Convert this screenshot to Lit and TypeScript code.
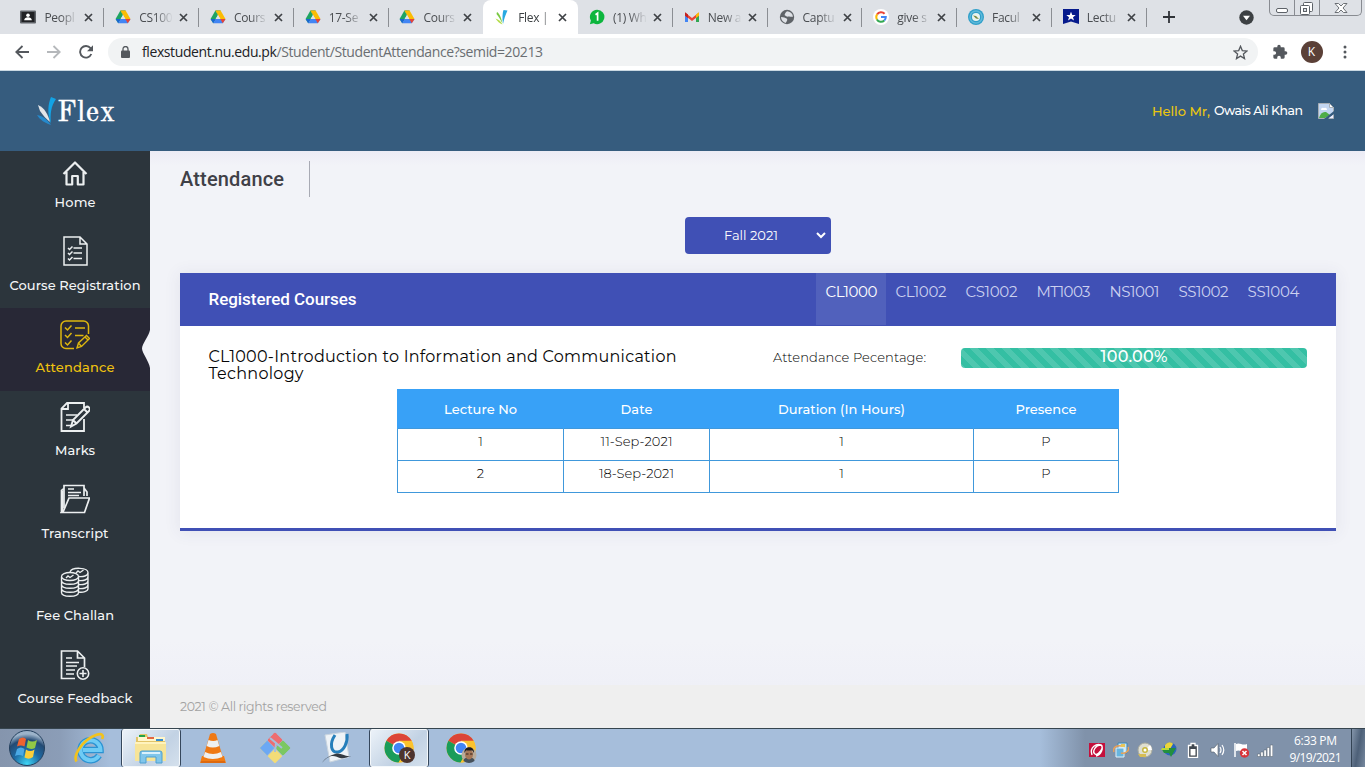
import { LitElement, html, css, svg } from "lit";
import { customElement, property, query } from "lit/decorators.js";
import { classMap } from "lit/directives/class-map.js";

/** Single line of text tracked out (or in) to occupy a given width. */
@customElement("fit-text")
class FitText extends LitElement {
  @property({ type: Number }) width = 0;
  @query("span") private span!: HTMLSpanElement;
  static styles = css`
    :host { display: inline-block; white-space: nowrap; text-align: left; }
    span { display: inline-block; }
  `;
  firstUpdated() {
    const natural = this.span.getBoundingClientRect().width;
    const count = (this.textContent || "").trim().length;
    if (natural && count > 1) {
      this.span.style.letterSpacing = `${(this.width - natural) / (count - 1)}px`;
    }
    this.style.width = `${this.width}px`;
  }
  render() {
    return html`<span><slot></slot></span>`;
  }
}

const favicons: Record<string, unknown> = {
  people: svg`<rect y="1.5" width="16" height="13" rx="1" fill="#5f6368"/><rect x="1.5" y="3" width="13" height="10" fill="#202124"/>
    <circle cx="8" cy="6.2" r="1.8" fill="#fff"/><path d="M4.2 11.3c0-4 7.6-4 7.6 0z" fill="#fff"/>`,
  drive: svg`
    <path d="M5.4 1.5h5.2L8 6z" fill="#188038"/>
    <path d="M5.4 1.5 0.6 10l2.6 4.2L8 6z" fill="#1fa463"/>
    <path d="M10.6 1.5 15.5 10h-5.2L5.4 1.5z" fill="#fbbc04"/>
    <path d="M3.2 14.3 5.8 10h9.7l-2.7 4.3z" fill="#4285f4"/>
    <path d="M10.3 10h5.2l-2.7 4.3z" fill="#ea4335"/>
    <path d="M.6 10h5.2l-2.6 4.3z" fill="#1967d2"/>
    <path d="M8 6 5.700 10h4.600z" fill="#dee1e6"/>`,
  flex: svg`<path d="M9 15C8 9 8.500 4 9.500 1l4 .5C11.500 6 10 10 9 15z" fill="#27a9e1"/><path d="M8.500 14.500C7.500 9.500 6 5 3 3l-.5 2C5 8 6.500 11 8.500 14.500z" fill="#7ac943"/><path d="M8.500 15.500C7 12.500 5 10.500 1.500 9.500 3.500 12.500 5.500 14.500 8.500 15.500z" fill="#b5dd4b"/>`,
  whatsapp: svg`<path d="M8.200.8a7.200 7.200 0 1 1-3.500 13.500L.9 15.200l1-3.600A7.200 7.200 0 0 1 8.200.8z" fill="#0db63e"/><path d="M6.500 5.700 8.600 4.200v7.600" stroke="#fff" stroke-width="1.700" fill="none"/>`,
  gmail: svg`<path d="M1 4v9h3V6.500z" fill="#4285f4"/><path d="M15 4v9h-3V6.500z" fill="#34a853"/><path d="M1 3.500 8 9l7-5.500v3L8 12 1 6.500z" fill="#ea4335"/><path d="M12 5.500 15 3.200v3.500l-3 2.200z" fill="#fbbc04"/><path d="M1 3.200 4 5.500V9L1 6.700z" fill="#c5221f"/>`,
  globe: svg`<circle cx="8" cy="8" r="7.200" fill="#5f6368"/><path d="M2 8c3 0 4 1 5.500 1.500S8 12.500 6.500 14C4 13 2 11 2 8zM8 2.200c3 .2 5.500 2 6 5.300-1.500 1-3-.5-4.500 0S7 7 6 6.500 6 4 8 2.200z" fill="#dee1e6"/>`,
  google: svg`<circle cx="8" cy="8" r="8" fill="#fff"/><g fill="none" stroke-width="2"><path d="M4.100 5.400A4.800 4.800 0 0 1 11.600 4.800" stroke="#ea4335"/><path d="M3.900 10.400A4.800 4.800 0 0 1 4.100 5.400" stroke="#fbbc04"/><path d="M11.300 11.500A4.800 4.800 0 0 1 3.900 10.400" stroke="#34a853"/><path d="M8 8h4.800a4.800 4.800 0 0 1-1.500 3.500" stroke="#4285f4"/></g>`,
  faculty: svg`<circle cx="8" cy="8" r="8" fill="#2f9fc9"/><circle cx="8" cy="8" r="6" fill="none" stroke="#5fb9da" stroke-width="1.500"/><circle cx="8" cy="8" r="4" fill="#e9f4ee"/><path d="m5 6.500 3 .5 3 3-3-.5z" fill="#7a8b43"/>`,
  lecture: svg`<path d="M0 0h16v15l-8-2.500L0 15z" fill="#061a8c"/><path d="m8 2.800 1.300 3.300h3.400l-2.700 2.100 1 3.400-3-2-3 2 1-3.400-2.700-2.100h3.400z" fill="#fff"/>`,
};

const tabs = [
  ["people", "Peopl"], ["drive", "CS100"], ["drive", "Cours"], ["drive", "17-Se"],
  ["drive", "Cours"], ["flex", "Flex |"], ["whatsapp", "(1) Wh"], ["gmail", "New a"],
  ["globe", "Captu"], ["google", "give s"], ["faculty", "Facul"], ["lecture", "Lectu"],
];

@customElement("browser-chrome")
class BrowserChrome extends LitElement {
  static styles = css`
    :host { display: block; height: 71px; font-family: "Open Sans", "Noto Sans", sans-serif; flex: none; }
    .strip { height: 34px; background: #dee1e6; display: flex; padding-left: 9.600px; box-sizing: border-box; }
    .tab { width: 94.780px; box-sizing: border-box; flex: none; display: flex; align-items: center; padding: 0 9px 0 10.800px; position: relative; color: #4a4d51; }
    .tab svg.fav { width: 16px; height: 16px; flex: none; }
    .title { font-size: 12px; letter-spacing: -.3px; width: 38px; margin-left: 8px; white-space: nowrap; flex: none;
      -webkit-mask-image: linear-gradient(90deg, #000 16px, transparent 34px); }
    .close { width: 9px; height: 9px; margin-left: 2px; flex: none; }
    .rule { position: absolute; right: 0; top: 8px; width: 1px; height: 19px; background: #8b8e93; }
    .active { background: #fff; border-radius: 8px 8px 0 0; color: #3c4043; }
    .active .title { -webkit-mask-image: linear-gradient(90deg, #000 24px, transparent 34px); }
    .plus { width: 12px; height: 12px; align-self: center; margin-left: 16px; }
    .search { width: 15px; height: 15px; align-self: center; margin: 0 0 0 auto; }
    .win { display: flex; width: 93px; height: 16px; box-sizing: border-box; border: 1px solid #888b91; border-top: 0; border-radius: 0 0 5px 5px; margin: 0 3px 0 15px; }
    .win svg { display: block; height: 16px; flex: none; }
    .win svg + svg { border-left: 1px solid #888b91; }
    .bar { height: 36px; background: #fff; display: flex; align-items: center; }
    .nav { display: flex; gap: 18px; padding-left: 15px; width: 108px; box-sizing: border-box; flex: none; }
    .nav svg { width: 14px; height: 14px; }
    .omni { width: 1149.500px; height: 28px; border-radius: 14px; background: #f1f3f4; display: flex; align-items: center; box-sizing: border-box; padding: 0 10px 0 13px; flex: none; }
    .lock { width: 9px; height: 12px; }
    .url { font-size: 14px; margin-left: 12px; color: #6a6e72; line-height: 20px; height: 20px; }
    .url b { color: #202124; font-weight: 400; }
    .star { width: 15px; height: 15px; margin-left: auto; }
    .puzzle { width: 16px; height: 16px; margin-left: 14px; }
    .avatar { width: 22px; height: 22px; border-radius: 50%; background: #5b4037; color: #fff; font-size: 12px; line-height: 22px; text-align: center; margin-left: 13px; }
    .dots { width: 4px; height: 14px; margin-left: 20px; }
    .line { height: 1px; background: #c9d8e2; }
  `;
  render() {
    return html`
      <div class="strip">
        ${tabs.map(([icon, title], i) => html`
          <div class=${classMap({ tab: true, active: i === 5 })}>
            <svg class="fav" viewBox="0 0 16 16">${favicons[icon]}</svg>
            <span class="title">${title}</span>
            <svg class="close" viewBox="0 0 9 9"><path d="m1 1 7 7M8 1 1 8" stroke="#3f4246" stroke-width="1.700"/></svg>
            ${i === 4 || i === 5 ? "" : html`<i class="rule"></i>`}
          </div>`)}
        <svg class="plus" viewBox="0 0 12 12"><path d="M6 0v12M0 6h12" stroke="#303338" stroke-width="1.800"/></svg>
        <svg class="search" viewBox="0 0 15 15"><circle cx="7.500" cy="7.500" r="7.200" fill="#3c4043"/><path d="M4 5.800h7l-3.500 4.400z" fill="#fff"/></svg>
        <div class="win">
          <svg width="24" viewBox="0 0 24 16"><rect x="6.500" y="8.500" width="11" height="4" rx="1.500" fill="#fff" stroke="#5d6268"/></svg>
          <svg width="24" viewBox="0 0 24 16"><rect x="8.500" y="2.500" width="9" height="9" rx="1" fill="#fff" stroke="#5d6268"/><rect x="5.500" y="5.500" width="9" height="9" rx="1" fill="#fff" stroke="#5d6268"/><rect x="8.500" y="8.500" width="3" height="3" fill="#dee1e6" stroke="#5d6268"/></svg>
          <svg width="41" viewBox="0 0 41 16"><path d="M15 3.500h3.500L21 6l2.500-2.500H27L23 8l4 4.500h-3.500L21 10l-2.500 2.500H15L19 8z" fill="#fff" stroke="#5d6268" stroke-width=".9"/></svg>
        </div>
      </div>
      <div class="bar">
        <div class="nav">
          <svg viewBox="0 0 14 14"><path d="M14 7H1.500M7.500 1 1.300 7l6.200 6" fill="none" stroke="#54585d" stroke-width="1.800"/></svg>
          <svg viewBox="0 0 14 14"><path d="M0 7h12.500M6.500 1l6.200 6-6.200 6" fill="none" stroke="#b5b8bb" stroke-width="1.800"/></svg>
          <svg viewBox="0 0 14 14"><path d="M12.300 9A5.800 5.800 0 1 1 11.500 3.200L13 5" fill="none" stroke="#54585d" stroke-width="1.900"/><path d="M14 .3v6H8z" fill="#54585d"/></svg>
        </div>
        <div class="omni">
          <svg class="lock" viewBox="0 0 9 12"><rect y="4.500" width="9" height="7.500" rx="1" fill="#54585d"/><path d="M2 5V3a2.500 2.500 0 0 1 5 0v2" fill="none" stroke="#54585d" stroke-width="1.300"/></svg>
          <fit-text class="url" width="401"><b>flexstudent.nu.edu.pk</b>/Student/StudentAttendance?semid=20213</fit-text>
          <svg class="star" viewBox="0 0 15 15"><path d="m7.500 1.300 1.800 4.300 4.700.4-3.600 3 1.100 4.600-4-2.500-4 2.500 1.100-4.600L1 6l4.700-.4z" fill="none" stroke="#54585d" stroke-width="1.300"/></svg>
        </div>
        <svg class="puzzle" viewBox="0 0 24 24"><path d="M20.500 11H19V7a2 2 0 0 0-2-2h-4V3.500a2.500 2.500 0 0 0-5 0V5H4a2 2 0 0 0-2 2v3.800h1.500a2.700 2.700 0 0 1 0 5.400H2V20a2 2 0 0 0 2 2h3.800v-1.500a2.700 2.700 0 0 1 5.400 0V22H17a2 2 0 0 0 2-2v-4h1.500a2.500 2.500 0 0 0 0-5z" fill="#54585d"/></svg>
        <div class="avatar">K</div>
        <svg class="dots" viewBox="0 0 4 14"><g fill="#54585d"><circle cx="2" cy="2" r="1.500"/><circle cx="2" cy="7" r="1.500"/><circle cx="2" cy="12" r="1.500"/></g></svg>
      </div>
      <div class="line"></div>`;
  }
}

const menuIcons = [
  svg`<path d="M3.500 16 15 4.500 26.500 16M6.500 14v12.500h5.700V18h5.600v8.500h5.700V14" stroke-width="2.200" stroke-linejoin="round"/>`,
  svg`<path d="M4 1h16l7 7v21H4zM20 1v7h7" stroke-width="1.500"/><path d="M13.500 12H22M13.500 17H22M13.500 22.500H22M8 12l1.500 1.500 3-3M8 17l1.500 1.500 3-3M8 22.500l1.500 1.500 3-3" stroke-width="1.500"/>`,
  svg`<path d="M14 28.500H6A5 5 0 0 1 1 23.500V6a5 5 0 0 1 5-5h17.500a5 5 0 0 1 5 5v8" stroke-width="1.500"/><path d="m5 7.500 2.500 2.500 4-4.500M5 15l2.500 2.500 4-4.500M5 22.500 7.500 25l4-4.500M15 8h10M15 15.500h8.500" stroke-width="1.500"/><path d="m17 28 1.500-5 8-7.500 3 3-8 8zM25 17l3 3M18.500 23l3 3.500" stroke-width="1.400"/>`,
  svg`<path d="M24 17v12H1.500V6.500L7 1h17v5M1.500 7H8V1" stroke-width="1.800"/><path d="M6 13h11M6 18h7M6 23.500h5" stroke-width="1.700"/><path d="M11 24.500 13 18 25.500 5.500a2 2 0 0 1 3.500 3.500L16.500 21.500zM13 18l3.500 3.500M24 7l3.500 3.500" stroke-width="1.900"/>`,
  svg`<path d="M1.500 28.500V6.500l2.500-2V24M4 8V1.500h20V12M24 4l3 4v4" stroke-width="1.700"/><path d="M2.500 28V7" stroke-width="2"/><path d="M1.500 28.500h23L29.500 14H9L3.500 27z" stroke-width="1.700"/><path d="M8 5h6M8 8.500h13M8 11.500h11" stroke-width="1.500"/>`,
  svg`<g stroke-width="1.350"><ellipse cx="10" cy="9.500" rx="8.500" ry="4"/><path d="M1.500 10v15.500c0 5 17 5 17 0V10M1.500 13.500c0 5 17 5 17 0M1.500 17.500c0 5 17 5 17 0M1.500 21.500c0 5 17 5 17 0"/><path d="M10 5c2-5.500 18-4.500 18 .5v16c0 3-5 4.200-9.500 3.500M18.500 9.500C23 10 28 9 28 5.500M18.500 13.500c4.500.5 9.500-.5 9.500-4M18.500 17.500c4.500.5 9.500-.5 9.500-4M18.500 21.500c4.500.5 9.500-.5 9.500-4M6 11l2-2 2 1.500L13.500 8M16 6l2-2 2 1.500L23.500 3"/></g>`,
  svg`<path d="M15 28.500H1.500V1h16l7 7v9M17.500 1v7h7" stroke-width="1.700"/><path d="M6 8h6M6 12.500h13M6 16h11M6 20h9M6 24h8" stroke-width="1.600"/><circle cx="23" cy="23.500" r="5.700" stroke-width="1.600"/><path d="M23 20v7M19.500 23.500h7" stroke-width="1.600"/>`,
];
const menu: [string, number][] = [
  ["Home", 41], ["Course Registration", 131], ["Attendance", 79], ["Marks", 40],
  ["Transcript", 67], ["Fee Challan", 78], ["Course Feedback", 115],
];

@customElement("side-menu")
class SideMenu extends LitElement {
  static styles = css`
    :host { display: flex; flex-direction: column; justify-content: flex-end; width: 150px; background: #2c353c; flex: none; overflow: hidden; }
    .item { height: 82.700px; box-sizing: border-box; padding-top: 10.500px; display: flex; flex-direction: column; align-items: center; flex: none; color: #f4f6f7; font-size: 13px; font-weight: 500; position: relative; }
    .item svg.icon { width: 30px; height: 30px; fill: none; stroke: #eceff0; flex: none; }
    .item fit-text { line-height: 18px; margin-top: 9.500px; }
    .first svg.icon { margin-top: 4.500px; margin-bottom: -4.500px; }
    .active { background: #282836; color: #f0c30f; }
    .active svg.icon { stroke: #ddb60f; margin-top: .8px; margin-bottom: -.8px; }
    .notch { position: absolute; right: 0; top: 22px; width: 9px; height: 38px; }
    .rest { height: 6.200px; flex: none; }
  `;
  render() {
    return html`${menu.map(([label, w], i) => html`
      <div class=${classMap({ item: true, active: i === 2, first: i === 0 })}>
        <svg class="icon" viewBox="0 0 30 30">${menuIcons[i]}</svg>
        <fit-text width=${w}>${label}</fit-text>
        ${i === 2 ? html`<svg class="notch" viewBox="0 0 9 38"><path d="M9 0C8 6 1 14 1 18.500S8 31 9 38z" fill="#f2f3f8"/></svg>` : ""}
      </div>`)}<div class="rest"></div>`;
  }
}

const courses: [string, number][] = [
  ["CL1000", 52], ["CL1002", 51], ["CS1002", 52], ["MT1003", 54], ["NS1001", 50], ["SS1002", 50], ["SS1004", 52],
];
const lectures = [["1", "11-Sep-2021", "1", "P"], ["2", "18-Sep-2021", "1", "P"]];

@customElement("attendance-page")
class AttendancePage extends LitElement {
  static styles = css`
    :host { display: flex; flex-direction: column; flex: 1; background: linear-gradient(#ececf5 0, #f2f3f8 14px, #f2f3f8 490px, #eff0f7 534px); min-width: 0; }
    .content { flex: 1; padding: 10px 29px 0 30px; }
    .head { display: flex; height: 36px; align-items: center; }
    .head fit-text { font: 500 20px/30px Roboto, sans-serif; color: #3f4047; }
    .head i { width: 1px; height: 36px; background: #a8aab4; margin-left: 25px; }
    .select { width: 146px; height: 37px; box-sizing: border-box; border-radius: 4px; background: #4050b5; color: #fff; font-size: 13px; margin: 20px auto 19px; display: flex; align-items: center; padding: 0 5px 0 39px; justify-content: space-between; }
    .select fit-text { padding-bottom: 2px; }
    .select svg { width: 10px; height: 7px; }
    .card { background: #fff; height: 258px; box-sizing: border-box; border-bottom: 3px solid #4050b5; box-shadow: 0 1px 15px 1px rgba(69, 65, 120, .08); display: flex; flex-direction: column; }
    .bar { height: 53px; background: #4050b5; display: flex; align-items: center; padding-left: 28.500px; flex: none; }
    .bar > fit-text { font: 500 17px/24px Roboto, sans-serif; color: #fff; padding-bottom: 2px; }
    .tabs { display: grid; grid-template-columns: 70px 70px 71px 73px 69px 69px 71px; margin: 0 27px 0 auto; height: 53px; }
    .tab { padding: 9px 0 0 9.500px; font-size: 15px; font-weight: 400; line-height: 20px; color: #ccd1f0; }
    .tab.on { background: #5161bc; color: #fff; height: 43px; }
    .summary { display: flex; padding: 22px 29px 0 28.500px; height: 63px; box-sizing: border-box; flex: none; }
    .name { width: 564.500px; font-size: 16px; line-height: 17px; color: #060606; display: flex; flex-direction: column; }
    .label { font-size: 13px; line-height: 18px; font-weight: 300; color: #000; }
    .progress { margin-left: auto; width: 346px; height: 20px; border-radius: 4px; color: #fff; font-size: 16px; line-height: 17px; text-align: center; font-weight: 500;
      background: linear-gradient(-135deg, rgba(255,255,255,.13) 25%, transparent 25% 50%, rgba(255,255,255,.13) 50% 75%, transparent 75%) 0 0 / 16px 16px #34bfa3; }
    .progress { background-image: linear-gradient(-135deg, rgba(255,255,255,.13) 25%, transparent 25%, transparent 50%, rgba(255,255,255,.13) 50%, rgba(255,255,255,.13) 75%, transparent 75%); }
    table { border-collapse: collapse; width: 722px; table-layout: fixed; margin-left: 217px; font-size: 13px; }
    th { background: #38a1f7; color: #fff; font-weight: 500; height: 39px; padding: 0; border: 1px solid #38a1f7; border-bottom: 0; box-sizing: border-box; }
    td { border: 1px solid #4098db; height: 32px; box-sizing: border-box; padding: 0 0 7px; text-align: center; font-weight: 300; color: #000; }
    .a { width: 166px; } .b { width: 146px; } .c { width: 264px; } .d { width: 145px; }
    footer { height: 43px; background: #efefef; padding-left: 30px; display: flex; align-items: center; font-size: 12.500px; color: #a2a2a2; flex: none; }
  `;
  render() {
    return html`
      <div class="content">
        <div class="head"><fit-text width="104">Attendance</fit-text><i></i></div>
        <div class="select"><fit-text width="54">Fall 2021</fit-text><svg viewBox="0 0 10 7"><path d="m1 1 4 4 4-4" fill="none" stroke="#fff" stroke-width="2"/></svg></div>
        <div class="card">
          <div class="bar"><fit-text width="148">Registered Courses</fit-text>
            <div class="tabs">${courses.map(([c, w], i) => html`<div class=${classMap({ tab: true, on: i === 0 })}><fit-text width=${w}>${c}</fit-text></div>`)}</div>
          </div>
          <div class="summary">
            <div class="name"><fit-text width="468">CL1000-Introduction to Information and Communication</fit-text><fit-text width="95">Technology</fit-text></div>
            <fit-text class="label" width="153">Attendance Pecentage:</fit-text>
            <div class="progress"><fit-text width="67">100.00%</fit-text></div>
          </div>
          <table>
            <tr><th class="a"><fit-text width="73">Lecture No</fit-text></th><th class="b"><fit-text width="32">Date</fit-text></th><th class="c"><fit-text width="127">Duration (In Hours)</fit-text></th><th class="d"><fit-text width="61">Presence</fit-text></th></tr>
            ${lectures.map((r, i) => html`<tr>${r.map((c, j) => html`<td>${j === 1 ? html`<fit-text width=${i ? 75 : 72}>${c}</fit-text>` : c}</td>`)}</tr>`)}
          </table>
        </div>
      </div>
      <footer><fit-text width="147">2021 © All rights reserved</fit-text></footer>`;
  }
}

const chrome = svg`
  <circle cx="15" cy="15" r="14.500" fill="#fbc22d"/>
  <path d="M15 15 2.400 7.800A14.500 14.500 0 0 1 27.600 7.800z" fill="#dc4437"/>
  <path d="M2.400 7.800A14.500 14.500 0 0 0 14.500 29.500L21.500 18.500 15 15z" fill="#1a9c5a"/>
  <path d="M27.600 7.800H15v7l6.500 3.700-7 11A14.500 14.500 0 0 0 27.600 7.800z" fill="#fbc22d"/>
  <circle cx="15" cy="15" r="6.800" fill="#fff"/><circle cx="15" cy="15" r="5.300" fill="#4285f4"/>`;

const apps = [
  svg`<path d="M26 23.500A10 10 0 1 1 27.500 18H10" fill="none" stroke="#2a93d3" stroke-width="6.500"/><path d="M26 23.500A10 10 0 1 1 27.500 18H10" fill="none" stroke="#6ecbf5" stroke-width="4"/><path d="M3.500 29.500C0 24 9 8 23 3c6-2 8 0 6 4" fill="none" stroke="#f2c21c" stroke-width="2.700"/>`,
  svg`<path d="M1 5h3l1-3h7l1 3h17v24H1z" fill="#e2c468"/><path d="M3 5h27v4H3z" fill="#fff6cb"/><path d="M4 3h6v2H4z" fill="#24a247"/><path d="M12 5h7v2h-7z" fill="#e26642"/><path d="M21 7h7v2h-7z" fill="#338bd1"/><path d="M0 10h31v19H0z" fill="#f7e497"/><path d="M0 10h31v2H0z" fill="#fff3bd"/><path d="M5 31V21q0-2 2-2h18q2 0 2 2v10h-6v-6H11v6z" fill="#80c6eb" stroke="#4c9fd0"/><path d="M7 21h18" stroke="#d9f1fd" stroke-width="2"/>`,
  svg`<path d="M5 24h22l2 7H3z" fill="#f27c13"/><path d="M13 2q3-2 6 0l7 24q-10 4-20 0z" fill="#ef7914"/><path d="m11.500 8-1.800 6q6 3 12.600 0l-1.800-6q-4 2-9 0zM8 20l-1.500 5q9 4 19 0L24 20q-8 4-16 0z" fill="#eef0f1"/><path d="M4 30h24" stroke="#c9570c"/>`,
  svg`<g transform="rotate(45 16 16)"><rect x="5" y="5" width="10.500" height="10.500" rx="1" fill="#ed6d70"/><rect x="16.500" y="5" width="10.500" height="10.500" rx="1" fill="#7bc862"/><rect x="5" y="16.500" width="10.500" height="10.500" rx="1" fill="#f3dc77"/><rect x="16.500" y="16.500" width="10.500" height="10.500" rx="1" fill="#f3dc77"/></g><g transform="rotate(45 16 16)"><rect x="5" y="5" width="10.500" height="10.500" rx="1" fill="#ed6d70"/></g><path d="M8.200 8.500 15.500 16l-7.400 7.400L.7 16z" fill="#6ca8f4"/><path d="M16 1l7.400 7.400L16 15.800 8.600 8.400z" fill="#ed6d70"/><path d="m23.800 8.600 7.400 7.400-7.400 7.400-7.400-7.400z" fill="#7bc862"/><path d="m11 6 6 5-1 9M17 11l6 5" fill="none" stroke="#a6bedb" stroke-width="2"/>`,
  svg`<path d="M4 3 24 0l4 25-19 5z" fill="#eef3f7" stroke="#cad5df"/><path d="M14 3c-6 9-4 18 3 17 6-1 10-10 9-18" fill="none" stroke="#267fbb" stroke-width="3"/><path d="M1 31c9-11 14-6 18-5s7-1 11-2c-7 1-10-4-16-2S4 26 1 31z" fill="#343b42"/>`,
  svg`<g transform="translate(1 1)">${chrome}</g><circle cx="24" cy="23" r="8" fill="#4d342e"/><text x="24" y="27" text-anchor="middle" font-size="11" fill="#fff">K</text>`,
  svg`<g transform="translate(1 1)">${chrome}</g><circle cx="24" cy="23" r="7.500" fill="#b8ac9c"/><path d="M18.500 29c0-5 11-5 11 0q-5.500 4-11 0z" fill="#46515b"/><ellipse cx="24" cy="22.500" rx="4" ry="5" fill="#a67757"/><path d="M19.500 21c-1-7 10-8 9.500 0l-1.500-2.500h-6.500z" fill="#201b1a"/><path d="M21 22h2.500m1.500 0h2.500" stroke="#312521"/>`,
];

const tray = [
  svg`<rect y="1" width="16" height="14" fill="#c4103c"/><path d="M3 13C0 5 8 1 12 3s-3 11-6 9 0-9 6-9c3 3 0 10-5 11" fill="none" stroke="#fff" stroke-width="1.400"/>`,
  svg`<path d="M5 1h9v10H5z" fill="#c8e6f5" stroke="#3c86b4"/><path d="M3 6h8v9H3z" fill="#68b5de" stroke="#e1f1fa"/><path d="M8 2h4v3H8z" fill="#e8c659"/><path d="M1 10C-1 5 5 3 8 4m7 1c2 4-3 7-7 6" fill="none" stroke="#e8a159" stroke-width="1.500"/>`,
  svg`<circle cx="8" cy="8" r="7" fill="#dfdfd0" stroke="#abac9f"/><path d="m8 8 5-5a7 7 0 0 1 2 5z" fill="#fff"/><circle cx="8" cy="8" r="3" fill="#c8b83f"/><circle cx="8" cy="8" r="1.500" fill="#fff"/><path d="M1 12h8v3H3z" fill="#d6bd55"/>`,
  svg`<circle cx="9" cy="7" r="6.500" fill="#2a65bd"/><path d="M4 3c3-4 7-3 8-1L9 7H4z" fill="#ecd439"/><path d="M1 7.500h7V6h7l-5 9-2-4H3z" fill="#238f3d"/><path d="M1 6h7v2H0z" fill="#b9d838"/>`,
  svg`<path d="M6 1.500h4v2h2.500v12h-9v-12H6z" fill="#40474f" stroke="#fff" stroke-width="1.300"/><path d="M5.500 7h5v6.500h-5z" fill="#fff"/>`,
  svg`<path d="M2 6h3l4-4.500v13L5 10H2z" fill="#fff" stroke="#515b66" stroke-width=".6"/><path d="M11 5q2 3 0 6M13 3q3.500 5 0 10" fill="none" stroke="#fff" stroke-width="1.200"/>`,
  svg`<path d="M2 1v14" stroke="#fff" stroke-width="1.500"/><path d="M3 2c4-2 6 2 11 0v7c-5 2-7-2-11 0z" fill="#fff"/><circle cx="11.500" cy="11" r="4.700" fill="#d8343a"/><path d="m9.500 9 4 4m0-4-4 4" stroke="#fff" stroke-width="1.500"/>`,
  svg`<g fill="#fff" stroke="#505c69" stroke-width=".5"><path d="M.5 12h2.500v2.500H.5zM3.700 10h2.500v4.500H3.700zM6.900 8h2.500v6.500H6.900zM10.100 5.500h2.500v9h-2.500zM13.300 3h2.500v11.500h-2.500z"/></g>`,
];

@customElement("task-bar")
class TaskBar extends LitElement {
  static styles = css`
    :host { display: flex; height: 39px; box-sizing: border-box; border-top: 1px solid #36454f; flex: none; overflow: hidden; background: linear-gradient(90deg, #8595ad 0, #8b9db7 60px, #a6bedb 110px, #a6bedb 1040px, #8092aa 1085px); font-family: "Open Sans", "Noto Sans", sans-serif; }
    .start { width: 58px; padding-left: 8px; box-sizing: border-box; flex: none; }
    .start svg { width: 38px; height: 38px; display: block; }
    .app { width: 60px; margin: 0 1px; flex: none; box-sizing: border-box; display: flex; justify-content: center; padding-top: 3px; border: 1px solid transparent; border-top: 0; border-bottom: 0; }
    .app svg { width: 32px; height: 32px; }
    .open { background: linear-gradient(135deg, #edf3f9, #c2d2e4 60%, #d5e1ed); border-color: #35475c; border-radius: 3px; box-shadow: inset 0 0 0 1px #f4f8fb; }
    .tray { display: flex; gap: 8px; align-items: center; margin-left: auto; padding-top: 3px; }
    .tray svg { width: 16px; height: 16px; }
    .clock { color: #fff; font-size: 12px; line-height: 17px; width: 78px; box-sizing: border-box; text-align: center; padding: 3px 0 0 7px; }
    .peek { width: 14px; box-sizing: border-box; border-left: 1px solid #334354; background: linear-gradient(100deg, #8495aa, #4d6078 50%, #77899f); }
  `;
  render() {
    return html`
      <div class="start"><svg viewBox="0 0 38 38">
        <defs><radialGradient id="orb" cx="50%" cy="95%" r="85%"><stop offset="0" stop-color="#3fd5f5"/><stop offset=".45" stop-color="#1d6ba5"/><stop offset=".8" stop-color="#244a73"/><stop offset="1" stop-color="#9cb3ca"/></radialGradient></defs>
        <circle cx="19" cy="19" r="17.500" fill="url(#orb)" stroke="#24405e"/>
        <path d="M11 10q4-3 7 0l-1.500 7.500q-4-2-7.500 0z" fill="#ee6330"/><path d="M20 11q4 3 9 0l-2 8q-4 2-8.500-.5z" fill="#91c846"/><path d="M9 20q4-3 7.500 0L15 27q-4-2-8 0z" fill="#4ba9e5"/><path d="M18 20.500q4 3 8.500 0L25 28q-4 3-8.500.5z" fill="#fbce3a"/>
      </svg></div>
      ${apps.map((a, i) => html`<div class=${classMap({ app: true, open: i === 1 || i === 5 })}><svg viewBox="0 0 32 32">${a}</svg></div>`)}
      <div class="tray">${tray.map((t) => html`<svg viewBox="0 0 16 16">${t}</svg>`)}</div>
      <div class="clock"><fit-text width="43">6:33 PM</fit-text><br><fit-text width="52">9/19/2021</fit-text></div>
      <div class="peek"></div>`;
  }
}

@customElement("app-root")
class AppRoot extends LitElement {
  static styles = css`
    :host { display: flex; flex-direction: column; width: 1365px; height: 767px; overflow: hidden; font-family: Montserrat, Inter, sans-serif; }
    header { height: 80px; background: #365c7e; display: flex; align-items: center; padding: 0 31px 0 35px; flex: none; }
    .mark { width: 22px; height: 30px; }
    .logo { font: 29px/36px "Old Standard TT", "Liberation Serif", serif; color: #fff; margin-top: 6px; -webkit-text-stroke: .5px #fff; }
    .hello { margin-left: auto; color: #ebc60e; font-size: 13px; font-weight: 500; }
    .user { color: #fff; font-size: 12.500px; font-weight: 500; margin-left: 4px; padding-bottom: 2px; }
    .broken { width: 16px; height: 16px; margin-left: 15px; }
    main { flex: 1; display: flex; min-height: 0; }
  `;
  render() {
    return html`
      <browser-chrome></browser-chrome>
      <header>
        <svg class="mark" viewBox="0 0 22 30"><path d="M16 28C12 17 13 8 16 1l5 2C16 10 15 18 16 28z" fill="#13a3e5"/><path d="M15 26C13 18 9.500 12 3 9l2 6c3 4 6 8 10 11z" fill="#e3e5e8"/><path d="M16 29C13 24 8 20 2 19c3 5 8 8 14 10z" fill="#2589cc"/></svg>
        <fit-text class="logo" width="58">Flex</fit-text>
        <fit-text class="hello" width="58">Hello Mr,</fit-text>
        <fit-text class="user" width="89">Owais Ali Khan</fit-text>
        <svg class="broken" viewBox="0 0 16 16"><path d="M.5.500h11l4 4v11H.5z" fill="#c3d6f1" stroke="#a8afb5"/><path d="M11.500.500v4h4z" fill="#fff" stroke="#a8afb5"/><path d="M3 7q0-3 3-2 3-1 3 2z" fill="#fff"/><path d="M1 15q2-7 7-6l4 3-5 3z" fill="#4fad48"/><path d="m6 16 10-8v3l-6 5z" fill="#365c7e"/><path d="m11 15 4-3v3z" fill="#eef"/></svg>
      </header>
      <main><side-menu></side-menu><attendance-page></attendance-page></main>
      <task-bar></task-bar>`;
  }
}
